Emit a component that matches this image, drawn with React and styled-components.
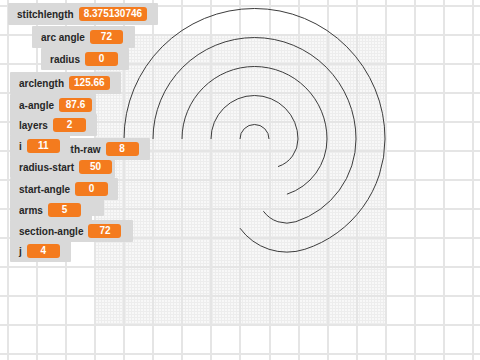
import styled, { createGlobalStyle } from "styled-components";

const GlobalStyle = createGlobalStyle`
    html, body {
        margin: 0;
        padding: 0;
        background: #ffffff;
    }
`;

// the monitor with no label/value is almost fully covered, only its edge shows
const monitors = [
    { label: "stitchlength", value: "8.375130746", x: 8, y: 3, w: 150 },
    { label: "arc angle", value: "72", x: 32, y: 26, w: 103 },
    { label: "radius", value: "0", x: 41, y: 48, w: 88 },
    { label: "arclength", value: "125.66", x: 10, y: 72, w: 111 },
    { label: "a-angle", value: "87.6", x: 10, y: 94, w: 86 },
    { label: "layers", value: "2", x: 10, y: 114, w: 87 },
    { label: "length-raw", value: "8", x: 41, y: 138, w: 109 },
    { label: "i", value: "11", x: 10, y: 135, w: 60 },
    { label: "radius-start", value: "50", x: 10, y: 156, w: 105 },
    { label: "", value: "", x: 10, y: 194, w: 94, pad: 35 },
    { label: "start-angle", value: "0", x: 10, y: 178, w: 108 },
    { label: "arms", value: "5", x: 10, y: 199, w: 82 },
    { label: "section-angle", value: "72", x: 10, y: 220, w: 123 },
    { label: "j", value: "4", x: 10, y: 240, w: 61 },
];

// pen trails: top half circles around (254.5, 139), bottom arcs in 72 degree sections
const arms = [
    "M240 139 A14.5 14.5 0 0 1 269 139",
    "M211 139 A43.5 43.5 0 0 1 298 139 A29 29 0 0 1 278 166.6",
    "M182 139 A72.5 72.5 0 0 1 327 139 A58 58 0 0 1 286.9 194.2",
    "M153 139 A101.5 101.5 0 0 1 356 139 A87 87 0 0 1 295.9 221.7 A29 29 0 0 1 263.4 211.2",
    "M124 139 A130.5 130.5 0 0 1 385 139 A116 116 0 0 1 304.8 249.3 A58 58 0 0 1 240 228.2",
];

export default function App() {
    return (
        <>
            <GlobalStyle />
            <SStage>
                <SPen width="480" height="360" viewBox="0 0 480 360">
                    {arms.map((d, i) => (
                        <path key={i} d={d} fill="none" stroke="#3c3c3c" strokeWidth="1" />
                    ))}
                </SPen>
                {monitors.map((m, i) => (
                    <SMonitor key={i} $x={m.x} $y={m.y} $w={m.w}>
                        <SLabel $minw={m.pad}>{m.label}</SLabel>
                        <SValue>{m.value}</SValue>
                    </SMonitor>
                ))}
            </SStage>
        </>
    );
}

const SStage = styled.div`
    position: relative;
    width: 480px;
    height: 360px;
    overflow: hidden;
    background-color: #ffffff;
    background-image:
        repeating-linear-gradient(to right, #e5e5e5 0 2px, transparent 2px 29.06px),
        repeating-linear-gradient(to bottom, #e5e5e5 0 2px, transparent 2px 29.03px),
        repeating-linear-gradient(to right, #ededed 0 1px, transparent 1px 3px),
        repeating-linear-gradient(to bottom, #ededed 0 1px, transparent 1px 3px),
        linear-gradient(#f8f8f8, #f8f8f8);
    background-repeat: repeat, repeat, no-repeat, no-repeat, no-repeat;
    background-size: 480px 360px, 480px 360px, 290px 289px, 290px 289px, 290px 289px;
    background-position: 7px 0, 0 5px, 95px 35px, 95px 35px, 95px 35px;
`;

const SPen = styled.svg`
    position: absolute;
    left: 0;
    top: 0;
`;

const SMonitor = styled.div`
    position: absolute;
    left: ${(p) => p.$x}px;
    top: ${(p) => p.$y}px;
    width: ${(p) => p.$w}px;
    height: 22px;
    box-sizing: border-box;
    padding-left: 9px;
    display: flex;
    align-items: center;
    gap: 5px;
    background: #d9d9d9;
    border-radius: 1px;
`;

const SLabel = styled.span`
    min-width: ${(p) => p.$minw || 0}px;
    font-family: "Liberation Sans", Arial, sans-serif;
    font-size: 10px;
    font-weight: bold;
    color: #262626;
    white-space: nowrap;
`;

const SValue = styled.span`
    box-sizing: border-box;
    min-width: 33px;
    height: 14px;
    padding: 0 5px;
    border-radius: 3px;
    background: #f47b1e;
    color: #ffffff;
    font-family: "Liberation Sans", Arial, sans-serif;
    font-size: 10px;
    font-weight: bold;
    line-height: 14px;
    text-align: center;
    white-space: nowrap;
`;
